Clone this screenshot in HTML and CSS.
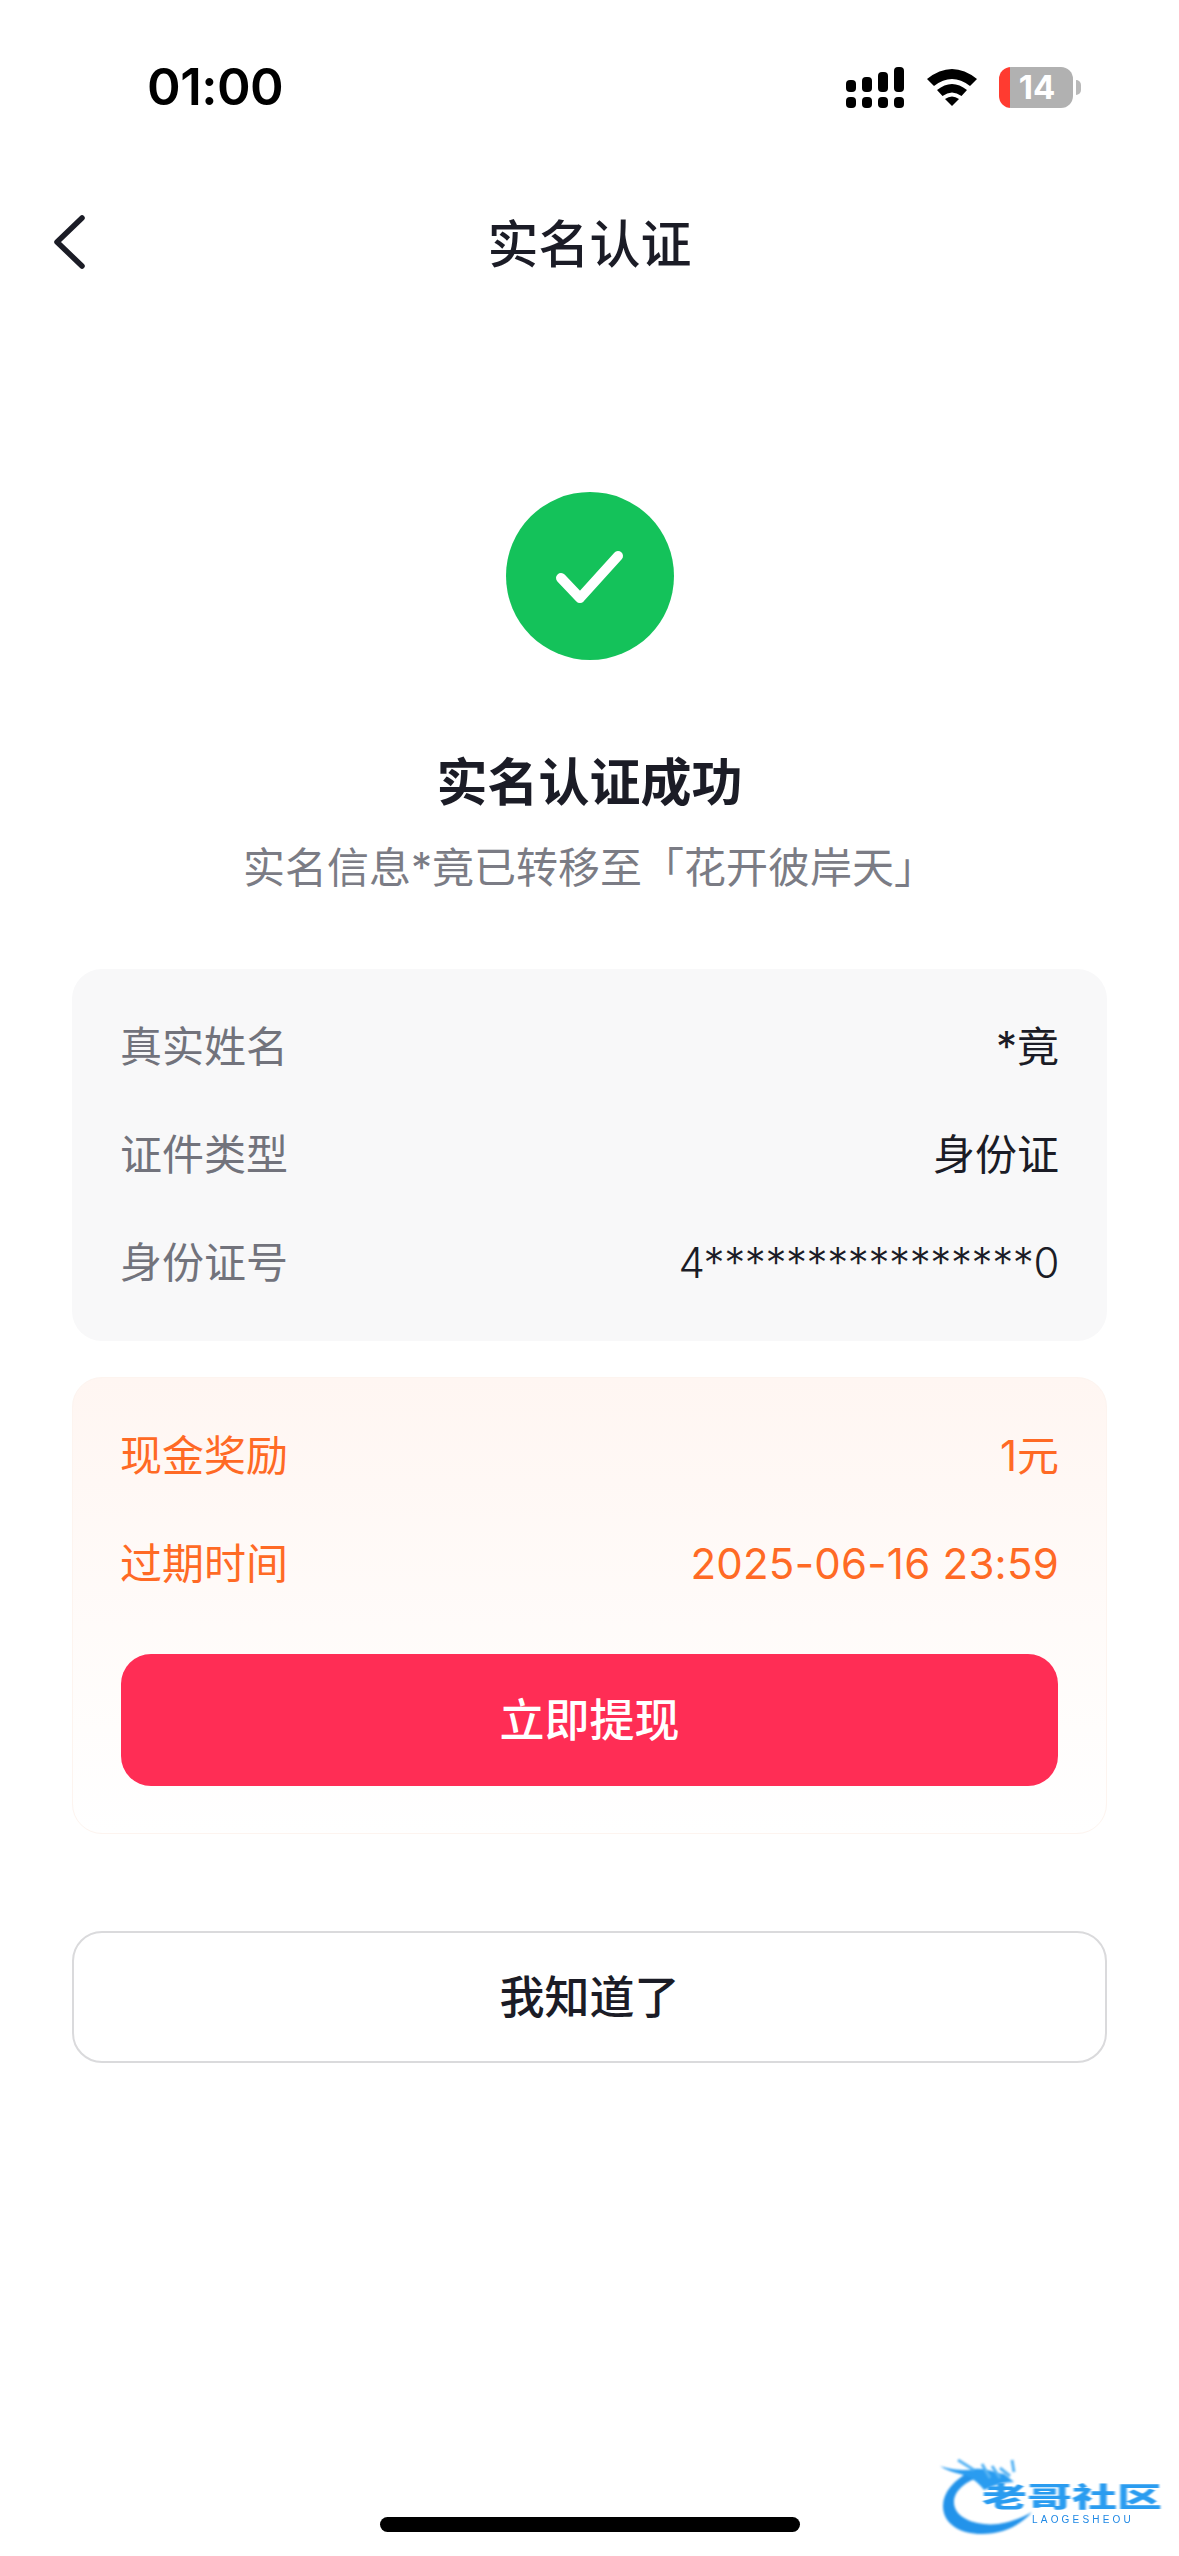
FILE: index.html
```html
<!DOCTYPE html>
<html lang="zh-CN">
<head>
<meta charset="utf-8">
<title>实名认证</title>
<link rel="stylesheet" href="styles.css">
</head>
<body>
<div class="page">
  <header class="status">
    <span class="time">01:00</span>
    <div class="status-icons">
      <svg class="signal" width="58" height="41" viewBox="0 0 58 41" fill="#000">
        <rect x="0" y="13" width="10" height="12" rx="4"/><rect x="16" y="10" width="10" height="15" rx="4"/><rect x="32" y="5" width="10" height="20" rx="4"/><rect x="48" y="0" width="10" height="25" rx="4"/>
        <rect x="0" y="30" width="10" height="11" rx="4"/><rect x="16" y="30" width="10" height="11" rx="4"/><rect x="32" y="30" width="10" height="11" rx="4"/><rect x="48" y="30" width="10" height="11" rx="4"/>
      </svg>
      <svg class="wifi" width="50" height="37" viewBox="0 0 50 37" fill="#000">
        <path d="M0 10Q25-10 50 10L43 17Q25 3 7 17Z"/>
        <path d="M10 21Q25 9 40 21L34.5 27Q25 20 15.5 27Z"/>
        <path d="M18 30Q25 25 32 30L25 37Z"/>
      </svg>
      <div class="battery">14</div>
    </div>
  </header>

  <nav class="nav">
    <svg class="back" width="32" height="54" viewBox="0 0 32 54" fill="none" stroke="#1b1c26" stroke-width="5.5" stroke-linecap="round" stroke-linejoin="round">
      <path d="M28 3L3 27L28 51"/>
    </svg>
    <h1 class="nav-title">实名认证</h1>
    <span></span>
  </nav>

  <main class="content">
    <div class="success-icon">
      <svg width="168" height="168" viewBox="0 0 168 168" fill="none">
        <circle cx="84" cy="84" r="84" fill="#14c25a"/>
        <path d="M55 86L74 106L112 64" stroke="#fff" stroke-width="10" stroke-linecap="round" stroke-linejoin="round"/>
      </svg>
    </div>
    <h2 class="heading">实名认证成功</h2>
    <p class="sub">实名信息*竟已转移至「花开彼岸天」</p>

    <section class="card card-info">
      <div class="row"><span class="label">真实姓名</span><span class="value">*竟</span></div>
      <div class="row"><span class="label">证件类型</span><span class="value">身份证</span></div>
      <div class="row"><span class="label">身份证号</span><span class="value value-id">4****************0</span></div>
    </section>

    <section class="card card-reward">
      <div class="row"><span>现金奖励</span><span>1元</span></div>
      <div class="row"><span>过期时间</span><span class="date">2025-06-16 23:59</span></div>
      <button class="btn btn-primary">立即提现</button>
    </section>

    <button class="btn btn-outline">我知道了</button>
  </main>

  <div class="home-bar"></div>

  <div class="watermark">
    <svg class="dragon" width="100" height="80" viewBox="0 0 100 80">
      <path d="M32 12C14 22 3 34 3 48C3 66 20 76 42 76C62 76 80 68 92 54C78 62 60 68 44 66C26 64 14 56 14 44C14 34 24 24 38 20Z" fill="#2393ea"/>
      <path d="M0 8C12 12 20 12 30 12C42 8 52 14 64 16L74 24C62 24 54 28 44 32C38 24 30 18 20 16C12 14 6 12 0 8Z" fill="#2a9cf0"/>
      <path d="M18 2L34 12M42 6L50 20M52 8L60 20M60 10L70 18M72 2L74 14" stroke="#57b4f4" stroke-width="3" fill="none"/>
    </svg>
    <span class="wm-title">老哥社区</span>
    <span class="wm-sub">LAOGESHEOU</span>
  </div>
</div>
</body>
</html>
```

FILE: styles.css
```css
* { box-sizing: border-box; }
html, body { margin: 0; padding: 0; background: #fff; }
body {
  font-family: "Inter", "Noto Sans CJK SC", "Noto Sans", sans-serif;
  color: #1b1c26;
}
.page { position: relative; width: 1179px; height: 2556px; overflow: hidden; }

.status {
  height: 180px;
  display: flex;
  justify-content: space-between;
  align-items: flex-start;
  padding: 57px 106px 0 147px;
}
.time { font-size: 51px; line-height: 60px; font-weight: 600; color: #000; letter-spacing: -0.5px; }
.status-icons { display: flex; align-items: center; margin-top: 10px; }
.wifi { margin-left: 23px; }
.battery {
  position: relative;
  margin-left: 22px;
  width: 74px;
  height: 41px;
  border-radius: 12px;
  background: linear-gradient(90deg, #ff3b30 11px, #b1b1b1 11px);
  color: #fff;
  font-size: 33px;
  line-height: 41px;
  font-weight: 700;
  text-align: center;
  padding-left: 2px;
}
.battery::after {
  content: "";
  position: absolute;
  left: 77px;
  top: 13px;
  width: 5px;
  height: 15px;
  border-radius: 0 8px 8px 0;
  background: #b9b9b9;
}

.nav {
  height: 130px;
  display: grid;
  grid-template-columns: 1fr auto 1fr;
  align-items: center;
  padding: 0 54px;
}
.back { margin-bottom: 6px; }
.nav-title { margin: 0; font-size: 51px; line-height: 60px; font-weight: 500; }

.content { display: flex; flex-direction: column; align-items: stretch; padding: 0 72px; }
.success-icon { display: flex; justify-content: center; margin-top: 182px; height: 168px; }
.heading { margin: 93px 0 0; font-size: 51px; line-height: 60px; font-weight: 700; text-align: center; }
.sub { margin: 25px 0 0; font-size: 42px; line-height: 60px; color: #7b7c85; text-align: center; white-space: nowrap; }

.card { border-radius: 30px; padding: 48px; display: flex; flex-direction: column; gap: 48px; }
.card-info { margin-top: 71px; background: #f8f8f9; }
.card-reward {
  margin-top: 36px;
  height: 457px;
  padding: 48px 47px 47px;
  background: linear-gradient(180deg, #fff6f2 0%, #ffffff 100%);
  border: 1px solid #fdf4ef;
  color: #ff6a25;
}
.row {
  display: flex;
  justify-content: space-between;
  align-items: center;
  font-size: 42px;
  line-height: 60px;
}
.label { color: #72737c; }
.value { color: #1b1c26; }
.value-id { font-weight: 300; letter-spacing: -0.4px; }
.date { letter-spacing: 0.25px; }

.btn {
  display: block;
  border-radius: 30px;
  font-family: inherit;
  font-size: 45px;
  font-weight: 500;
  padding: 0 0 5px;
}
.btn-primary { margin: 12px 1px 0; height: 132px; flex: none; border: 0; background: #ff2d55; color: #fff; }
.btn-outline { margin-top: 97px; height: 132px; padding-bottom: 6px; border: 2px solid #dadadc; background: #fff; color: #1b1c26; }

.home-bar {
  position: absolute;
  left: 380px;
  top: 2517px;
  width: 420px;
  height: 15px;
  border-radius: 8px;
  background: #000;
}

.watermark { position: absolute; left: 930px; top: 2450px; width: 249px; height: 106px; }
.dragon { position: absolute; left: 10px; top: 8px; filter: blur(0.9px); }
.wm-title {
  position: absolute;
  left: 52px;
  top: 31px;
  font-family: "Noto Sans CJK SC", sans-serif;
  font-size: 36px;
  line-height: 36px;
  font-weight: 900;
  white-space: nowrap;
  color: #2a9cf0;
  filter: blur(0.9px);
  transform: scale(1.25, 0.75);
  transform-origin: left top;
}
.wm-sub {
  position: absolute;
  left: 102px;
  top: 65px;
  font-family: "Liberation Sans", sans-serif;
  font-size: 10px;
  line-height: 10px;
  letter-spacing: 3.2px;
  white-space: nowrap;
  color: #1e88e5;
  filter: blur(0.3px);
}
```
